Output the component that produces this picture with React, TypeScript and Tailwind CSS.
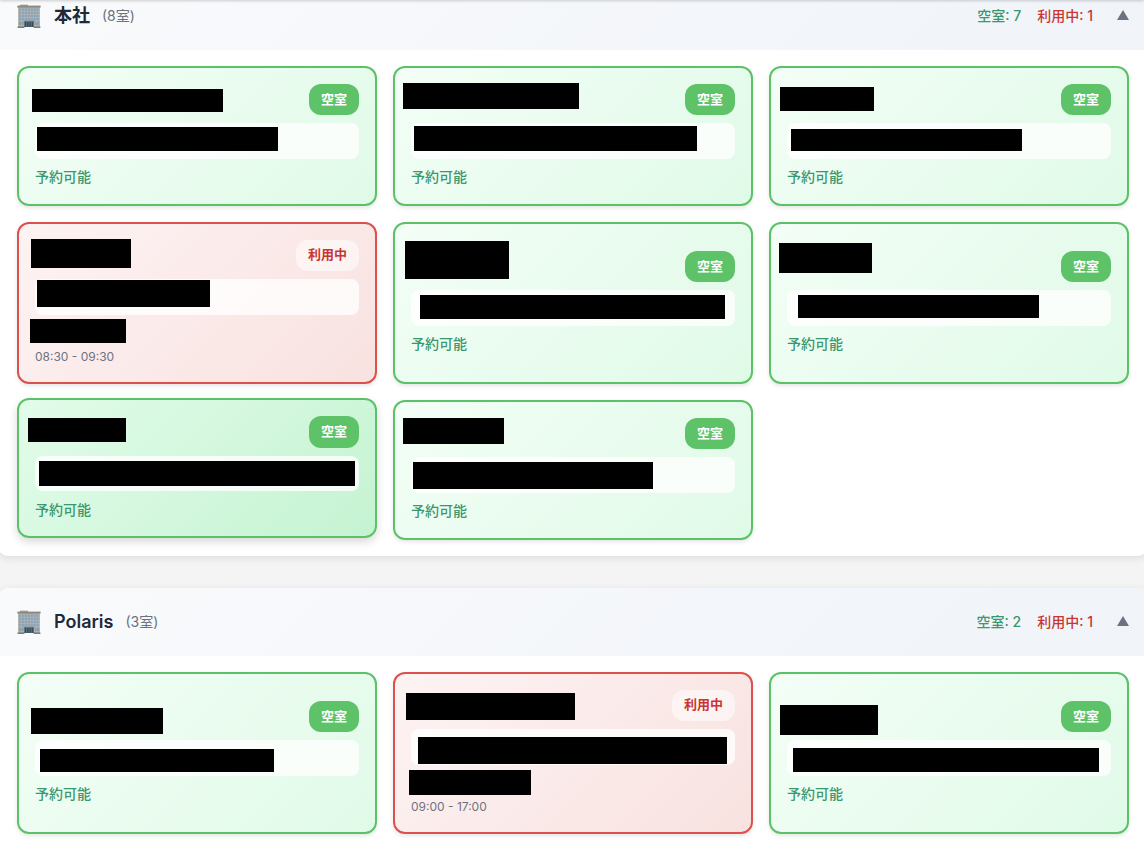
import clsx from "clsx";

type Room = {
  busy?: boolean;
  active?: boolean;
  time?: string;
  masks: string[];
};

type Office = {
  name: string;
  free: number;
  used: number;
  rooms: Room[];
};

const offices: Office[] = [
  {
    name: "本社",
    free: 7,
    used: 1,
    rooms: [
      { masks: ["left-[13px] top-[21px] w-[191px] h-[23px]", "left-[18px] top-[59px] w-[241px] h-[24px]"] },
      { masks: ["left-[8px] top-[15px] w-[176px] h-[26px]", "left-[19px] top-[58px] w-[283px] h-[25px]"] },
      { masks: ["left-[9px] top-[19px] w-[94px] h-[24px]", "left-[20px] top-[61px] w-[231px] h-[22px]"] },
      {
        busy: true,
        time: "08:30 - 09:30",
        masks: [
          "left-[12px] top-[15px] w-[100px] h-[29px]",
          "left-[18px] top-[56px] w-[173px] h-[27px]",
          "left-[11px] top-[95px] w-[96px] h-[24px]",
        ],
      },
      { masks: ["left-[10px] top-[17px] w-[104px] h-[38px]", "left-[25px] top-[71px] w-[305px] h-[24px]"] },
      { masks: ["left-[8px] top-[19px] w-[93px] h-[30px]", "left-[27px] top-[71px] w-[241px] h-[23px]"] },
      {
        active: true,
        masks: ["left-[9px] top-[18px] w-[98px] h-[24px]", "left-[20px] top-[61px] w-[316px] h-[25px]"],
      },
      { masks: ["left-[8px] top-[16px] w-[101px] h-[26px]", "left-[18px] top-[60px] w-[240px] h-[27px]"] },
    ],
  },
  {
    name: "Polaris",
    free: 2,
    used: 1,
    rooms: [
      { masks: ["left-[12px] top-[34px] w-[132px] h-[26px]", "left-[21px] top-[75px] w-[234px] h-[23px]"] },
      {
        busy: true,
        time: "09:00 - 17:00",
        masks: [
          "left-[11px] top-[19px] w-[169px] h-[27px]",
          "left-[23px] top-[63px] w-[309px] h-[27px]",
          "left-[14px] top-[96px] w-[122px] h-[25px]",
        ],
      },
      { masks: ["left-[9px] top-[31px] w-[98px] h-[30px]", "left-[22px] top-[74px] w-[306px] h-[24px]"] },
    ],
  },
];

const BuildingIcon = () => (
  <svg width="24" height="24" viewBox="0 0 24 24" className="shrink-0">
    <rect x="1" y="2" width="22" height="21" fill="#b9b5ad" />
    <rect x="3" y="0.6" width="8" height="1.6" fill="#aaa59d" />
    <rect x="0.4" y="1.6" width="23.2" height="2" fill="#8f867c" />
    {[4.4, 7.6, 10.8, 14].map((y) => (
      <g key={y}>
        {[2, 4.9, 7.8, 10.7, 13.6, 16.5, 19.4].map((x) => (
          <rect key={x} x={x} y={y} width="2.3" height="2.5" fill="#87a6bd" />
        ))}
      </g>
    ))}
    {[2, 4.6, 17.6, 20.2].map((x) => (
      <rect key={x} x={x} y="17.6" width="1.9" height="3.6" fill="#819daf" />
    ))}
    <rect x="6.8" y="16.8" width="10.4" height="1.2" fill="#7b6e64" />
    <rect x="7.4" y="18" width="9.2" height="5" fill="#34495a" />
    <path d="M9.7 18v5M12 18v5M14.3 18v5" stroke="#7890a0" strokeWidth="0.6" />
    <rect x="0.6" y="22.6" width="6.8" height="1.2" fill="#5d5d58" />
    <rect x="16.6" y="22.6" width="6.8" height="1.2" fill="#5d5d58" />
  </svg>
);

const RoomCard = ({ room }: { room: Room }) => {
  const { busy, active, time, masks } = room;
  return (
    <div
      className={clsx(
        "relative flex flex-col justify-center rounded-xl border-2 px-4 py-4 bg-linear-135",
        busy && "border-[#dc504d] from-[#fdf3f3] to-[#f8e2e0] shadow-[0_2px_4px_rgba(0,0,0,0.1)]",
        active &&
          "-translate-y-0.5 border-[#5cc268] from-[#e2fce9] to-[#c5f3d2] shadow-[0_4px_8px_rgba(0,0,0,0.15)]",
        !busy && !active && "border-[#5cc268] from-[#f3fef6] to-[#e0fae8] shadow-[0_2px_4px_rgba(0,0,0,0.1)]"
      )}
    >
      <div className="flex justify-end">
        <span
          className={clsx(
            "rounded-xl px-3 text-[13px] font-semibold",
            active ? "h-8" : "h-[31px]",
            busy
              ? "bg-white/50 leading-[29px] text-[#c93531]"
              : "bg-[#5ec269] leading-[31px] text-white"
          )}
        >
          {busy ? "利用中" : "空室"}
        </span>
      </div>
      <div className={clsx("mt-2 rounded-lg bg-white/80", active ? "h-[35px]" : "h-9")} />
      {busy ? (
        <>
          <div className="mt-2 h-[21px]" />
          <p className="mt-1 text-xs leading-[18px] text-[#6f7280]">{time}</p>
        </>
      ) : (
        <p
          className={clsx(
            "text-sm leading-[21px] font-medium text-[#3b976e]",
            active ? "mt-2" : "mt-[7px] mb-px"
          )}
        >
          予約可能
        </p>
      )}
      {masks.map((mask) => (
        <div key={mask} className={clsx("absolute bg-black", mask)} />
      ))}
    </div>
  );
};

const OfficeSection = ({ office }: { office: Office }) => {
  return (
    <section className="overflow-hidden rounded-xl bg-white shadow-[0_2px_8px_rgba(0,0,0,0.1)]">
      <header className="flex h-[68px] items-center justify-between bg-linear-135 from-[#f9fafc] to-[#f0f4f9] px-5">
        <div className="flex items-center">
          <BuildingIcon />
          <h2 className="ml-[13px] text-lg font-semibold text-[#1f2937]">{office.name}</h2>
          <span className="ml-3 text-sm text-[#6b7280]">({office.rooms.length}室)</span>
        </div>
        <div className="flex items-center text-sm font-medium">
          <span className="text-[#3b976e]">空室: {office.free}</span>
          <span className="ml-4 text-[#c93531]">利用中: {office.used}</span>
          <svg width="12" height="10" viewBox="0 0 12 10" className="mb-0.5 ml-6">
            <path d="M6 0L12 10H0Z" fill="#6b7280" />
          </svg>
        </div>
      </header>
      <div className="grid auto-rows-auto grid-cols-3 gap-4 px-5 py-4">
        {office.rooms.map((room, i) => (
          <RoomCard key={i} room={room} />
        ))}
      </div>
    </section>
  );
};

const App = () => {
  return (
    <div
      lang="ja"
      className="relative h-[846px] overflow-hidden bg-[#f4f4f4] font-['Inter','Noto_Sans_CJK_JP',sans-serif]"
    >
      <div className="absolute inset-x-0 -top-2 z-10 h-2 shadow-[0_1px_3px_rgba(0,0,0,0.18)]" />
      <main className="-mx-[3px] -mt-[18px] flex w-[1152px] flex-col gap-8">
        {offices.map((office) => (
          <OfficeSection key={office.name} office={office} />
        ))}
      </main>
    </div>
  );
};

export default App;
